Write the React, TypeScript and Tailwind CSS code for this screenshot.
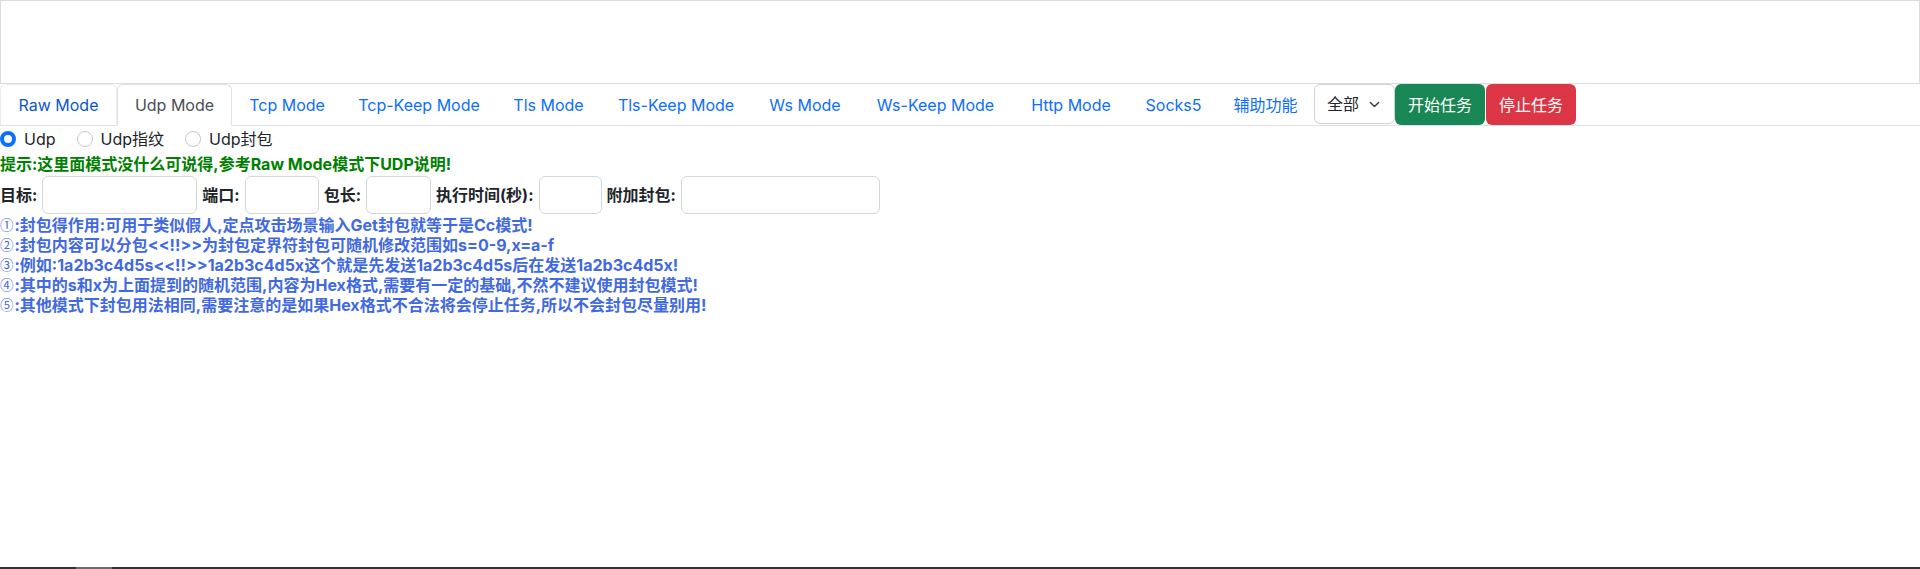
import React from "react";

const tabs: [string, string][] = [
  ["Raw Mode", "w-[117px]"],
  ["Udp Mode", "w-[115px]"],
  ["Tcp Mode", "w-[110px]"],
  ["Tcp-Keep Mode", "w-[154px]"],
  ["Tls Mode", "w-[105px]"],
  ["Tls-Keep Mode", "w-[150px]"],
  ["Ws Mode", "w-[108px]"],
  ["Ws-Keep Mode", "w-[153px]"],
  ["Http Mode", "w-[118px]"],
  ["Socks5", "w-[87px]"],
  ["辅助功能", "w-[97px]"],
];

const notes: [string, string][] = [
  ["①", ":封包得作用:可用于类似假人,定点攻击场景输入Get封包就等于是Cc模式!"],
  ["②", ":封包内容可以分包<<!!>>为封包定界符封包可随机修改范围如s=0-9,x=a-f"],
  ["③", ":例如:1a2b3c4d5s<<!!>>1a2b3c4d5x这个就是先发送1a2b3c4d5s后在发送1a2b3c4d5x!"],
  ["④", ":其中的s和x为上面提到的随机范围,内容为Hex格式,需要有一定的基础,不然不建议使用封包模式!"],
  ["⑤", ":其他模式下封包用法相同,需要注意的是如果Hex格式不合法将会停止任务,所以不会封包尽量别用!"],
];

function Tab({ label, w, index }: { label: string; w: string; index: number }) {
  if (index === 1) {
    return (
      <div className={`-mb-px flex h-[42px] items-center justify-center rounded-t-md border border-[#dee2e6] border-b-white bg-white text-[#495057] ${w}`}>
        {label}
      </div>
    );
  }
  if (index === 0) {
    return (
      <div className={`-mb-px flex h-[42px] items-center justify-center rounded-t-md border border-[#e9ecef] border-b-[#dee2e6] text-[#0a58ca] ${w}`}>
        {label}
      </div>
    );
  }
  return (
    <div className={`-mb-px flex h-[42px] items-center justify-center border border-transparent text-[#0d6efd] ${w}`}>
      {label}
    </div>
  );
}

function Radio({ label, checked }: { label: string; checked?: boolean }) {
  return (
    <label className="mr-[21px] flex items-center gap-2">
      {checked ? (
        <span className="flex h-4 w-4 items-center justify-center rounded-full bg-[#0d6efd]">
          <span className="h-2 w-2 rounded-full bg-white" />
        </span>
      ) : (
        <span className="h-4 w-4 rounded-full border border-[#c4c9ce] bg-white" />
      )}
      <span>{label}</span>
    </label>
  );
}

function Field({ label, w }: { label: string; w: string }) {
  return (
    <>
      <span className="font-bold">{label}</span>
      <span className={`h-[38px] rounded-md border border-[#d3d7dc] bg-white ${w}`} />
    </>
  );
}

export default function App() {
  return (
    <div className="flex h-screen flex-col bg-white font-['Inter','Noto_Sans_CJK_SC',sans-serif] text-[16px] leading-6 text-[#212529]">
      <div className="h-[84px] w-full border border-[#dcdcdc] bg-white" />
      <div className="flex h-[42px] items-stretch border-b border-[#dee2e6]">
        {tabs.map(([t, w], i) => (
          <Tab key={t} label={t} w={w} index={i} />
        ))}
        <div className="flex h-[40px] w-[81px] items-center justify-between rounded-md border border-[#ced4da] bg-white pl-3 pr-[14px]">
          <span>全部</span>
          <svg width="11" height="11" viewBox="0 0 16 16" fill="none">
            <path d="M2 5l6 6 6-6" stroke="#343a40" strokeWidth="2" strokeLinecap="round" strokeLinejoin="round" />
          </svg>
        </div>
        <div className="flex h-[41px] w-[90px] items-center justify-center rounded-md bg-[#198754] text-white">
          开始任务
        </div>
        <div className="ml-px flex h-[41px] w-[90px] items-center justify-center rounded-md bg-[#dc3545] text-white">
          停止任务
        </div>
      </div>
      <div className="mt-[1px] flex h-6 items-center">
        <Radio label="Udp" checked />
        <Radio label="Udp指纹" />
        <Radio label="Udp封包" />
      </div>
      <div className="h-6 pt-[1px] font-bold text-[#008000]">
        提示:这里面模式没什么可说得,参考Raw Mode模式下UDP说明!
      </div>
      <div className="mt-[1px] flex items-center gap-[5px]">
        <Field label="目标:" w="w-[155px]" />
        <Field label="端口:" w="w-[74px]" />
        <Field label="包长:" w="w-[65px]" />
        <Field label="执行时间(秒):" w="w-[63px]" />
        <Field label="附加封包:" w="w-[199px]" />
      </div>
      <div className="pt-px font-bold leading-5 text-[#4169e1]">
        {notes.map(([c, n]) => (
          <div key={n} className="flex h-5 items-center">
            <span className="mr-px font-['Noto_Sans_CJK_SC',sans-serif] text-[13.5px] font-normal leading-[13.5px]">{c}</span>
            <span className="leading-5">{n}</span>
          </div>
        ))}
      </div>
      <div className="mt-auto flex h-[2px] bg-[#333333]">
        <div className="ml-[76px] w-[36px] bg-[#6b6b6b]" />
      </div>
    </div>
  );
}
